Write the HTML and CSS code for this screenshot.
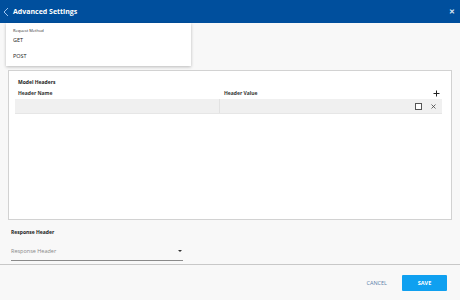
FILE: index.html
```html
<!DOCTYPE html>
<html>
<head>
  <title>Advanced Settings</title>
  <link rel="stylesheet" href="styles.css">
</head>
<body>

<div class="dialog">
  <div class="titlebar">
    <svg class="back" width="6" height="10" viewBox="0 0 6 10"><path d="M5 1 L1 5 L5 9" fill="none" stroke="#9fc4ee" stroke-width="1"/></svg>
    <span class="title">Advanced Settings</span>
    <span class="close">&#x2715;</span>
  </div>

  <div class="content">
    <!-- request method select, opened -->
    <div class="request-field"></div>
    <div class="menu">
      <div class="menu-label">Request Method</div>
      <div class="menu-item">GET</div>
      <div class="menu-item">POST</div>
    </div>

    <div class="headers-box">
      <div class="box-title">Model Headers</div>
      <div class="grid-head">
        <span class="col name">Header Name</span>
        <span class="col">Header Value</span>
        <svg class="add" width="7" height="7" viewBox="0 0 7 7"><path d="M3.5 0.5 V6.5 M0.5 3.5 H6.5" stroke="#222" stroke-width="1"/></svg>
      </div>
      <div class="grid-row">
        <div class="cell name"></div>
        <div class="cell value">
          <span class="check"></span>
          <svg class="remove" width="5" height="5" viewBox="0 0 5 5"><path d="M0.5 0.5 L4.5 4.5 M4.5 0.5 L0.5 4.5" stroke="#444" stroke-width="0.8"/></svg>
        </div>
      </div>
    </div>

    <div class="response">
      <div class="field-label">Response Header</div>
      <div class="select">
        <span class="placeholder">Response Header</span>
        <span class="caret"></span>
      </div>
    </div>
  </div>

  <div class="footer">
    <button class="cancel">CANCEL</button>
    <button class="save">SAVE</button>
  </div>
</div>

</body>
</html>
```

FILE: styles.css
```css
body {
  margin: 0;
  font-family: "Open Sans", "Noto Sans", sans-serif;
  background-color: #f8f8f8;
}

.dialog {
  display: flex;
  flex-direction: column;
  width: 460px;
  height: 300px;
}

.titlebar {
  display: flex;
  align-items: center;
  height: 23px;
  padding: 0 4px 0 3px;
  background-color: #004f9d;
  color: #fff;
  box-sizing: border-box;
}

.back {
  margin-right: 4px;
}

.title {
  flex: 1;
  font-size: 7px;
  font-weight: bold;
}

.close {
  font-size: 7px;
  font-weight: bold;
  color: #dfe8f5;
  margin-right: 1px;
}

.content {
  position: relative;
  height: 242px;
  padding: 0 8px 0 8px;
  border-bottom: 1px solid #c8c8c8;
  box-sizing: border-box;
}

.request-field {
  height: 47px;
}

.menu {
  position: absolute;
  top: 0;
  left: 6px;
  width: 185px;
  height: 43px;
  padding: 5px 0 0 7px;
  box-sizing: border-box;
  background-color: #fff;
  box-shadow: 0 1px 3px rgba(0,0,0,0.25);
}

.menu-label {
  font-size: 4px;
  color: #333;
  line-height: 6px;
}

.menu-item {
  font-size: 5.5px;
  color: #222;
  line-height: 8px;
  margin-top: 2px;
}

.menu-item + .menu-item {
  margin-top: 8px;
}

.headers-box {
  height: 150px;
  padding: 6px 5px 0 6px;
  background-color: #fff;
  border: 1px solid #d2d2d2;
  box-sizing: border-box;
}

.box-title {
  margin-left: 3px;
  font-size: 5px;
  font-weight: bold;
  color: #222;
  line-height: 10px;
}

.grid-head {
  display: flex;
  align-items: center;
  height: 12px;
  padding: 0 6px 0 3px;
  font-size: 5px;
  font-weight: bold;
  color: #333;
}

.grid-head .col {
  flex: 1;
}

.grid-head .name {
  flex: none;
  width: 206px;
}

.grid-row {
  display: flex;
  height: 14px;
  margin-right: 4px;
  background-color: #f0f0f0;
  border-bottom: 1px solid #e6e6e6;
}

.grid-row .name {
  width: 204px;
}

.value {
  flex: 1;
  display: flex;
  align-items: center;
  justify-content: flex-end;
  gap: 9px;
  padding-right: 6px;
  border-left: 1px solid #e2e2e2;
}

.check {
  width: 5px;
  height: 5px;
  border: 1px solid #555;
  background-color: #fff;
}

.response {
  padding: 7px 0 0 3px;
}

.field-label {
  font-size: 5px;
  font-weight: bold;
  color: #222;
  line-height: 10px;
}

.select {
  display: flex;
  align-items: center;
  justify-content: space-between;
  width: 172px;
  height: 18px;
  margin-top: 5px;
  border-bottom: 1px solid #8a8a8a;
}

.placeholder {
  font-size: 5.5px;
  color: #888;
}

.caret {
  width: 0;
  height: 0;
  margin-right: 1px;
  border-left: 2px solid transparent;
  border-right: 2px solid transparent;
  border-top: 2px solid #333;
}

.footer {
  display: flex;
  align-items: center;
  justify-content: flex-end;
  gap: 9px;
  flex: 1;
  padding-right: 13px;
}

.footer button {
  font-family: inherit;
  font-size: 5.5px;
  border: none;
  cursor: pointer;
}

.cancel {
  background: none;
  color: #5b80aa;
}

.save {
  width: 45px;
  height: 16px;
  background-color: #0fa0f0;
  color: #fff;
  font-weight: bold;
  border-radius: 1px;
}
```
